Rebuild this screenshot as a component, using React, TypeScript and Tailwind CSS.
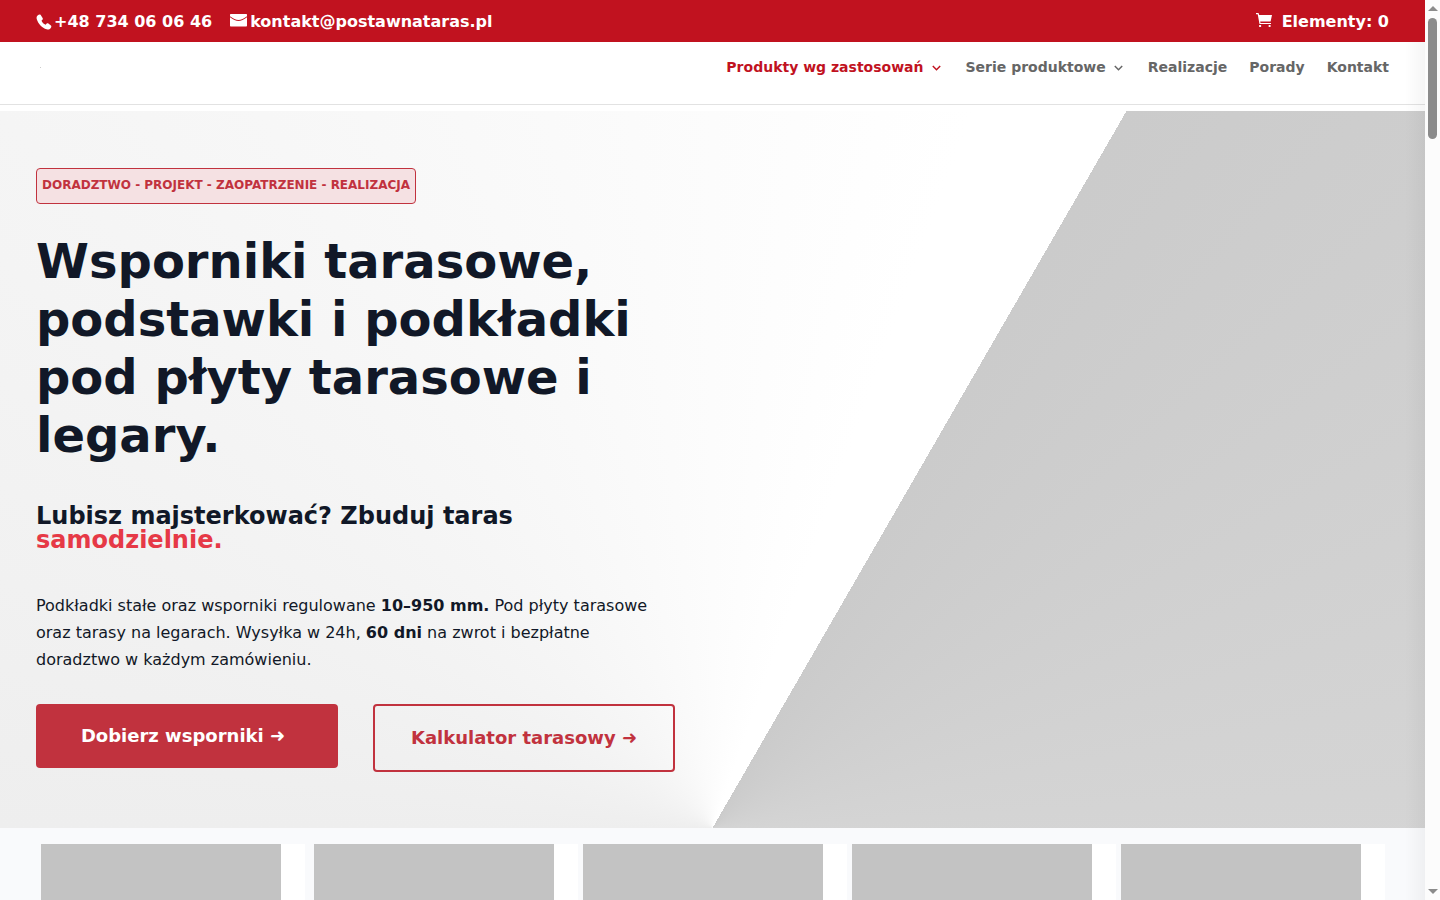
import React from "react";

const phonePath =
  "M4.700.900C3.900.200 2.600.600 1.600 1.400.500 2.300.400 3.700.800 5.200 2 9.400 6.200 14 10.600 15.300c1.600.500 3.100.200 4-1 .8-1 1-2 .3-2.700l-2.500-2c-.6-.5-1.400-.4-1.900.1l-.9 1C7.800 10 6.300 8.500 5.500 6.700l.9-.9c.5-.5.6-1.200.2-1.800z";

function PhoneIcon() {
  return (
    <svg viewBox="0 0 16 16" className="mt-1 size-4" fill="currentColor" aria-hidden="true">
      <path d={phonePath} />
    </svg>
  );
}

function MailIcon() {
  return (
    <svg viewBox="0 0 17 13" className="mt-1 h-[13px] w-[17px]" fill="currentColor" aria-hidden="true">
      <path d="M1 0h15c.6 0 1 .4 1 1v1.300C14 4.500 11 6 8.500 6S3 4.500 0 2.300V1c0-.6.4-1 1-1z" />
      <path d="M0 3.300C3 5.500 6 7 8.500 7S14 5.500 17 3.300V11.500c0 .6-.4 1-1 1H1c-.6 0-1-.4-1-1z" />
    </svg>
  );
}

function CartIcon() {
  return (
    <svg viewBox="0 0 16 14" className="mt-[3px] h-[14px] w-4" fill="currentColor" aria-hidden="true">
      <path d="M0 0h2.500l.7 2H16l-1.400 6.500H4.200l.3 1.500H15v1H3.500L1.700 1.200H0z" />
      <rect x="3" y="12" width="2.200" height="2" rx=".7" />
      <rect x="12.500" y="12" width="2.200" height="2" rx=".7" />
    </svg>
  );
}

function Chevron() {
  return (
    <svg viewBox="0 0 9 6" className="mt-0.5 mr-[3px] h-1.5 w-[9px]" fill="none" stroke="currentColor" strokeWidth="1.500" aria-hidden="true">
      <path d="M.8 1L4.500 4.700 8.200 1" />
    </svg>
  );
}

const links = [
  { label: "Produkty wg zastosowań", menu: true, active: true },
  { label: "Serie produktowe", menu: true, active: false },
  { label: "Realizacje", menu: false, active: false },
  { label: "Porady", menu: false, active: false },
  { label: "Kontakt", menu: false, active: false },
];

function TopBar() {
  return (
    <div className="flex h-[42px] items-start justify-between bg-[#c1121f] px-9 pt-2.5 font-bold text-white">
      <div className="flex items-start gap-[18px]">
        <a href="tel:+48734060646" className="flex items-start gap-0.5">
          <PhoneIcon />
          +48 734 06 06 46
        </a>
        <a href="mailto:kontakt@postawnataras.pl" className="flex items-start gap-[3px]">
          <MailIcon />
          kontakt@postawnataras.pl
        </a>
      </div>
      <a href="#koszyk" className="flex items-start gap-2.5">
        <CartIcon />
        Elementy: 0
      </a>
    </div>
  );
}

function Header() {
  return (
    <header className="flex h-[63px] items-start justify-between border-b border-[#e2e2e2] bg-white pr-9 pl-10">
      <a href="#start" aria-label="Strona główna" className="mt-[25px] size-px bg-[#cccccc]" />
      <nav className="flex gap-[22px] pt-[15px] text-sm font-bold">
        {links.map((link) => (
          <a
            key={link.label}
            href="#menu"
            className={
              link.active
                ? "flex items-center gap-2 text-[#c1121f]"
                : "flex items-center gap-2 text-[#666666]"
            }
          >
            {link.label}
            {link.menu && <Chevron />}
          </a>
        ))}
      </nav>
    </header>
  );
}

function Hero() {
  return (
    <section className="mt-1.5 bg-[conic-gradient(at_50%_100%,#fcfcfc_0deg,#ffffff_20deg,#ffffff_30deg,#cbcbcb_30deg,#d3d3d3_80deg,#eeeeee_270deg,#fcfcfc_360deg)] px-9 pt-[57px] pb-14 text-[#111827]">
      <div className="max-w-[639px]">
        <p className="flex h-9 w-fit items-start rounded border border-[#c1323e] bg-[#f5e1e3] px-[5px] pt-2 text-xs font-bold text-[#c1323e]">
          DORADZTWO - PROJEKT - ZAOPATRZENIE - REALIZACJA
        </p>
        <h1 className="mt-7 text-5xl leading-[58px] font-bold">
          Wsporniki tarasowe, podstawki i podkładki pod płyty tarasowe i legary.
        </h1>
        <h2 className="mt-10 text-2xl leading-6 font-bold">
          Lubisz majsterkować? Zbuduj taras <span className="block text-[#e63946]">samodzielnie.</span>
        </h2>
        <p className="mt-10 text-base leading-[27px]">
          Podkładki stałe oraz wsporniki regulowane <strong>10–950 mm.</strong> Pod płyty tarasowe oraz
          tarasy na legarach. Wysyłka w 24h, <strong>60 dni</strong> na zwrot i bezpłatne doradztwo w
          każdym zamówieniu.
        </p>
        <div className="mt-[31px] grid grid-cols-2 items-start gap-[35px] text-lg font-bold">
          <a href="#wsporniki" className="flex h-16 items-center justify-center rounded bg-[#c1323e] pr-9 pl-7 text-white">
            Dobierz wsporniki ➜
          </a>
          <a
            href="#kalkulator"
            className="flex h-[68px] items-center justify-center rounded border-2 border-[#c1323e] text-[#c1323e]"
          >
            Kalkulator tarasowy ➜
          </a>
        </div>
      </div>
    </section>
  );
}

function Cards() {
  return (
    <section className="flex-1 overflow-hidden bg-[#f9fafc] pt-4 pr-10 pl-[41px]">
      <div className="flex gap-[5px]">
        {[0, 1, 2, 3, 4].map((card) => (
          <article key={card} className="h-80 flex-1 bg-white pr-6 first:mr-1">
            <div className="h-60 bg-[#c3c3c3]" />
          </article>
        ))}
      </div>
    </section>
  );
}

function ScrollBar() {
  return (
    <aside className="flex w-[15px] flex-none flex-col items-center bg-[#fcfcfc] py-1.5" aria-hidden="true">
      <svg viewBox="0 0 10 5" className="h-[5px] w-2.5" fill="#8b8b8b">
        <path d="M5 0l5 5H0z" />
      </svg>
      <div className="mt-[7px] h-[121px] w-[9px] rounded-full bg-[#8b8b8b]" />
      <svg viewBox="0 0 10 5" className="mt-auto h-[5px] w-2.5" fill="#8b8b8b">
        <path d="M0 0h10L5 5z" />
      </svg>
    </aside>
  );
}

export default function App() {
  return (
    <div className="flex h-screen overflow-hidden bg-white font-['DejaVu_Sans',sans-serif] text-base">
      <div className="relative flex min-w-0 flex-1 flex-col">
        <TopBar />
        <Header />
        <Hero />
        <Cards />
        <div className="pointer-events-none absolute top-[42px] right-0 bottom-0 w-5 bg-linear-to-l from-black/4 to-transparent" />
      </div>
      <ScrollBar />
    </div>
  );
}
